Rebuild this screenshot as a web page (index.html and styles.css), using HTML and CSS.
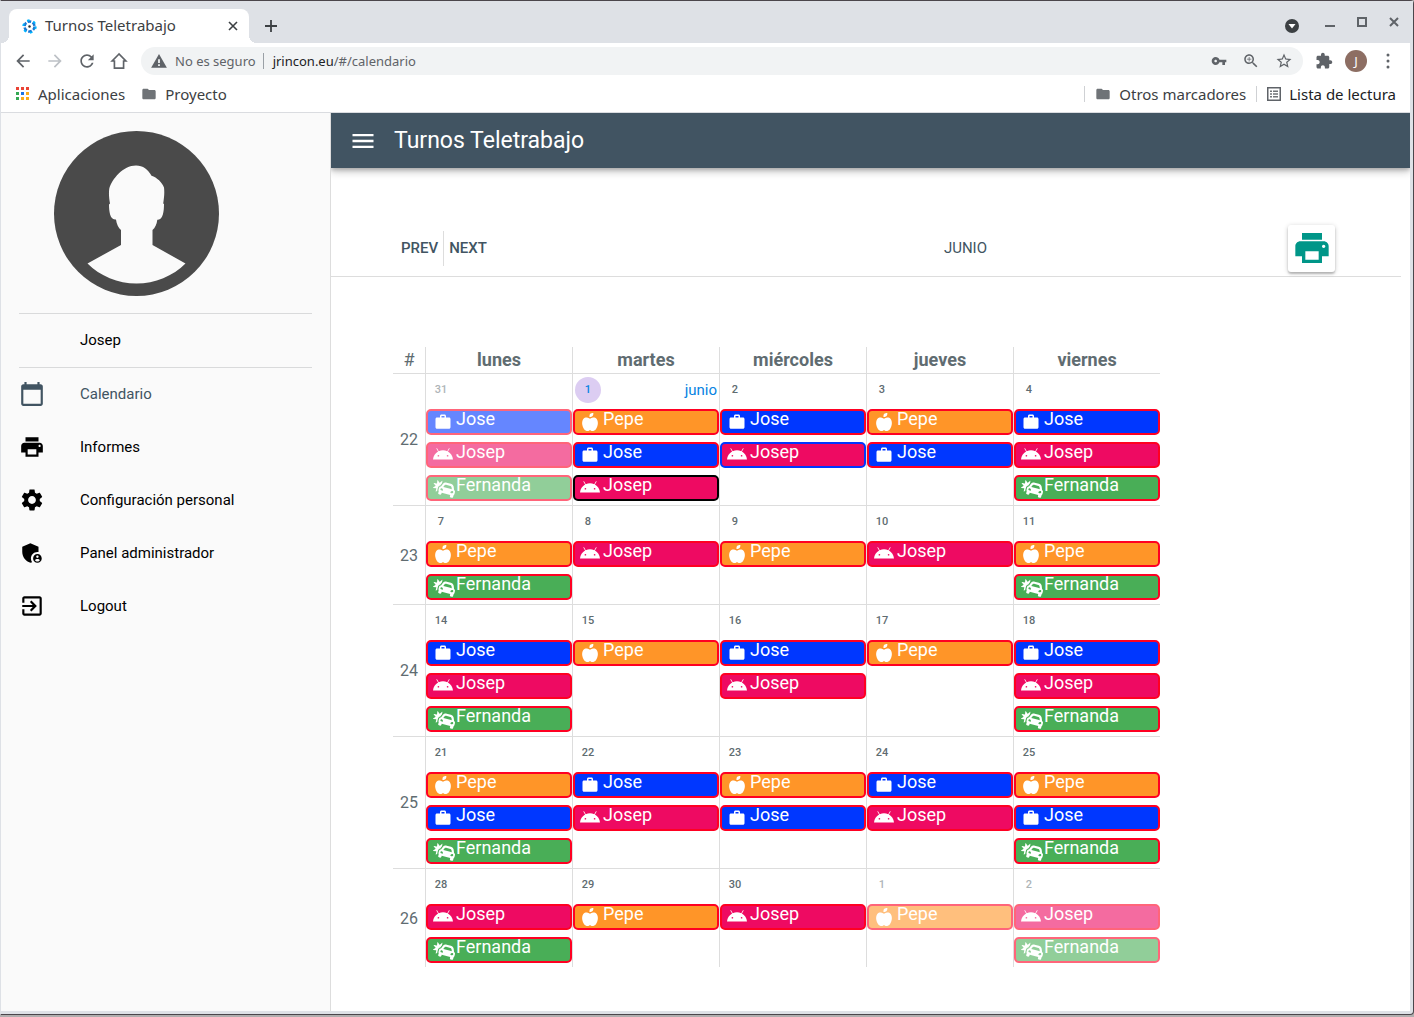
FILE: index.html
```html
<!DOCTYPE html>
<html lang="es">
<head>
<meta charset="utf-8">
<meta name="viewport" content="width=device-width, initial-scale=1">
<title>Turnos Teletrabajo</title>
<link rel="stylesheet" href="styles.css">
</head>
<body>
<svg class="sprite" aria-hidden="true">
  <symbol id="briefcase" viewBox="0 0 24 24"><path d="M20 6h-4V4c0-1.11-.89-2-2-2h-4c-1.11 0-2 .89-2 2v2H4c-1.11 0-1.99.89-1.99 2L2 19c0 1.11.89 2 2 2h16c1.11 0 2-.89 2-2V8c0-1.11-.89-2-2-2zm-6 0h-4V4h4v2z"/></symbol>
  <symbol id="apple" viewBox="0 0 448 512"><path d="M350.85 129c25.97 4.67 47.27 18.67 63.92 42 14.65 20.67 24.64 46.67 29.96 78 4.67 28.67 4.32 57.33-1 86-7.99 47.33-23.97 87-47.94 119-28.64 38.67-64.59 58-107.87 58-10.66 0-22.3-3.33-34.96-10-8.66-5.33-18.31-8-28.97-8s-20.3 2.67-28.97 8c-12.66 6.67-24.3 10-34.96 10-43.28 0-79.23-19.33-107.87-58-23.97-32-39.95-71.67-47.94-119-5.32-28.67-5.67-57.33-1-86 5.32-31.33 15.31-57.33 29.96-78 16.65-23.33 37.95-37.33 63.92-42 15.98-2.67 37.95-.33 65.92 7 23.97 6.67 44.28 14.67 60.93 24 16.65-9.33 36.96-17.33 60.93-24 27.98-7.33 49.96-9.67 65.94-7zm-54.94-41c-9.32 8.67-21.65 15-36.96 19-10.66 3.33-22.3 5-34.96 5l-14.98-1c-1.33-9.33-1.33-20 0-32 2.67-24 10.32-42.33 22.97-55 9.32-8.67 21.65-15 36.96-19 10.66-3.33 22.3-5 34.96-5l14.98 1 1 15c0 12.67-1.67 24.33-4.99 35-3.99 15.33-10.31 27.67-18.98 37z"/></symbol>
  <symbol id="android" viewBox="0 0 576 512"><path d="M420.55,301.93a24,24,0,1,1,24-24,24,24,0,0,1-24,24m-265.1,0a24,24,0,1,1,24-24,24,24,0,0,1-24,24m273.7-144.48,47.94-83a10,10,0,1,0-17.27-10h0l-48.54,84.07a301.25,301.25,0,0,0-246.56,0L116.18,64.45a10,10,0,1,0-17.27,10h0l47.94,83C64.53,202.22,8.24,285.55,0,384H576c-8.24-98.45-64.54-181.78-146.85-226.55"/></symbol>
  <symbol id="car" viewBox="0 0 640 512"><path d="M143.25 220.81l-12.42 46.37c-3.01 11.25-3.63 22.89-2.41 34.39l-35.2 28.98c-6.57 5.41-16.31-.43-14.62-8.77l15.44-76.68c1.06-5.26-2.66-10.28-8-10.79l-77.86-7.55c-8.47-.82-11.23-11.83-4.14-16.54l65.15-43.3c4.46-2.97 5.38-9.15 1.98-13.29L21.46 93.22c-5.41-6.57.43-16.3 8.78-14.62l76.68 15.44c5.26 1.06 10.28-2.66 10.8-8l7.55-77.86c.82-8.48 11.83-11.23 16.55-4.14l43.3 65.14c2.97 4.46 9.15 5.38 13.29 1.98l60.4-49.71c6.57-5.41 16.3.43 14.62 8.77L262.1 86.38c-2.71 3.05-5.43 6.09-7.91 9.4l-32.15 42.97-10.71 14.32c-32.73 8.76-59.18 34.53-68.08 67.74zm494.57 132.51l-12.42 46.36c-3.13 11.68-9.38 21.61-17.55 29.36a66.876 66.876 0 0 1-8.76 7l-13.99 52.23c-1.14 4.27-3.1 8.1-5.65 11.38-7.67 9.84-20.74 14.68-33.54 11.25L515 502.62c-17.07-4.57-27.2-22.12-22.63-39.19l8.28-30.91-247.28-66.26-8.28 30.91c-4.57 17.07-22.12 27.2-39.19 22.63l-30.91-8.28c-12.8-3.43-21.7-14.16-23.42-26.51-.57-4.12-.35-8.42.79-12.68l13.99-52.23a66.62 66.62 0 0 1-4.09-10.45c-3.2-10.79-3.65-22.52-.52-34.2l12.42-46.37c5.31-19.8 19.36-34.83 36.89-42.21a64.336 64.336 0 0 1 18.49-4.72l18.13-24.23 32.15-42.97c3.45-4.61 7.19-8.9 11.2-12.84 8-7.89 17.03-14.44 26.74-19.51 4.86-2.54 9.89-4.71 15.05-6.49 10.33-3.58 21.19-5.63 32.24-6.04 11.05-.41 22.31.82 33.43 3.8l122.68 32.87c11.12 2.98 21.48 7.54 30.85 13.43a111.11 111.11 0 0 1 34.69 34.5c8.82 13.88 14.64 29.84 16.68 46.99l6.36 53.29 3.59 30.05a64.49 64.49 0 0 1 22.74 29.93c4.39 11.88 5.29 25.19 1.75 38.39zM255.58 234.34c-18.55-4.97-34.21 4.04-39.17 22.53-4.96 18.49 4.11 34.12 22.65 39.09 18.55 4.97 45.54 15.51 50.49-2.98 4.96-18.49-15.43-53.67-33.97-58.64zm290.61 28.17l-6.36-53.29c-.58-4.87-1.89-9.53-3.82-13.86-5.8-12.99-17.2-23.01-31.42-26.82l-122.68-32.87a48.008 48.008 0 0 0-50.86 17.61l-32.15 42.97 172 46.08 75.29 20.18zm18.49 54.65c-18.55-4.97-53.8 15.31-58.75 33.79-4.95 18.49 23.69 22.86 42.24 27.83 18.55 4.97 34.21-4.04 39.17-22.53 4.95-18.48-4.11-34.12-22.66-39.09z"/></symbol>
  <symbol id="print" viewBox="0 0 24 24"><path d="M19 8H5c-1.66 0-3 1.34-3 3v6h4v4h12v-4h4v-6c0-1.66-1.34-3-3-3zm-3 11H8v-5h8v5zm3-7c-.55 0-1-.45-1-1s.45-1 1-1 1 .45 1 1-.45 1-1 1zm-1-9H6v4h12V3z"/></symbol>
  <symbol id="folder" viewBox="0 0 24 24"><path d="M10 4H4c-1.1 0-2 .9-2 2v12c0 1.100.9 2 2 2h16c1.100 0 2-.9 2-2V8c0-1.100-.9-2-2-2h-8l-2-2z"/></symbol>
</svg>
<div class="window">
  <header class="browser">
    <div class="tabs">
      <div class="tab">
        <svg class="favicon" viewBox="0 0 24 24"><g fill="none" stroke-width="4"><circle cx="12" cy="12" r="8" stroke="#1976d2" stroke-dasharray="6 2.380"/><circle cx="12" cy="12" r="10" stroke="#00b4ff" stroke-width="3" stroke-dasharray="4 6.470"/></g><circle cx="12" cy="12" r="2" fill="#263238"/></svg>
        <span class="tab-title">Turnos Teletrabajo</span>
        <button class="plain" aria-label="Cerrar pestaña"><svg class="i10" viewBox="0 0 10 10"><path d="M1 1l8 8M9 1l-8 8" fill="none" stroke="#3c4043" stroke-width="1.600"/></svg></button>
      </div>
      <button class="plain new-tab" aria-label="Nueva pestaña"><svg class="i12" viewBox="0 0 12 12"><path d="M6 0v12M0 6h12" fill="none" stroke="#3c4043" stroke-width="1.800"/></svg></button>
      <div class="controls">
        <button class="plain low" aria-label="Buscar pestañas"><svg class="i14" viewBox="0 0 14 14"><circle cx="7" cy="7" r="7" fill="#3c4043"/><path d="M3.500 5h7L7 9.500z" fill="#fff"/></svg></button>
        <button class="plain" aria-label="Minimizar"><svg class="i10" viewBox="0 0 10 10"><path d="M0 9h10" stroke="#5f6368" stroke-width="2"/></svg></button>
        <button class="plain" aria-label="Maximizar"><svg class="i10" viewBox="0 0 10 10"><path d="M1 1h8v8H1z" fill="none" stroke="#5f6368" stroke-width="2"/></svg></button>
        <button class="plain" aria-label="Cerrar"><svg class="i10" viewBox="0 0 10 10"><path d="M1 1l8 8M9 1l-8 8" fill="none" stroke="#5f6368" stroke-width="2"/></svg></button>
      </div>
    </div>
    <div class="toolbar">
      <button class="plain" aria-label="Atrás"><svg class="i20" viewBox="0 0 24 24"><path d="M20 11H7.830l5.590-5.590L12 4l-8 8 8 8 1.410-1.410L7.830 13H20v-2z"/></svg></button>
      <button class="plain faint" aria-label="Adelante"><svg class="i20" viewBox="0 0 24 24"><path d="M12 4l-1.410 1.410L16.170 11H4v2h12.170l-5.580 5.590L12 20l8-8z"/></svg></button>
      <button class="plain" aria-label="Recargar"><svg class="i20" viewBox="0 0 24 24"><path d="M17.650 6.350C16.200 4.900 14.210 4 12 4c-4.420 0-7.990 3.580-7.990 8s3.570 8 7.990 8c3.730 0 6.840-2.550 7.730-6h-2.080c-.82 2.330-3.040 4-5.650 4-3.310 0-6-2.690-6-6s2.690-6 6-6c1.660 0 3.140.69 4.220 1.780L13 11h7V4l-2.350 2.350z"/></svg></button>
      <button class="plain" aria-label="Inicio"><svg class="i20" viewBox="0 0 24 24"><path d="M12 3.600L3.800 12H6.500V20.500h11V12h2.700z" fill="none" stroke="#5f6368" stroke-width="2"/></svg></button>
      <div class="omnibox">
        <svg class="i18" viewBox="0 0 24 24"><path d="M1.500 21h21L12 2.500zM13.200 18.500h-2.400v-2.200h2.400zm0-4h-2.400V9.500h2.400z"/></svg>
        <span class="insecure">No es seguro</span>
        <label class="host" for="url">jrincon.eu</label>
        <input class="url" id="url" type="text" value="/#/calendario">
        <button class="plain" aria-label="Contraseñas"><svg class="i16" viewBox="0 0 24 24"><path d="M12.650 10C11.830 7.670 9.610 6 7 6c-3.310 0-6 2.690-6 6s2.690 6 6 6c2.610 0 4.830-1.670 5.650-4H17v4h4v-4h2v-4H12.650zM7 14c-1.100 0-2-.9-2-2s.9-2 2-2 2 .9 2 2-.9 2-2 2z"/></svg></button>
        <button class="plain" aria-label="Zoom"><svg class="i18" viewBox="0 0 24 24"><path d="M15.500 14h-.79l-.28-.27C15.410 12.590 16 11.110 16 9.500 16 5.910 13.090 3 9.500 3S3 5.910 3 9.500 5.910 16 9.500 16c1.610 0 3.090-.59 4.230-1.570l.27.28v.79l5 4.990L20.490 19l-4.990-5zm-6 0C7.010 14 5 11.990 5 9.500S7.010 5 9.500 5 14 7.010 14 9.500 11.990 14 9.500 14zM12.500 9H10V6.500H9V9H6.500v1H9v2.500h1V10h2.500z"/></svg></button>
        <button class="plain" aria-label="Añadir a marcadores"><svg class="i18" viewBox="0 0 24 24"><path d="M22 9.240l-7.190-.62L12 2 9.190 8.630 2 9.240l5.460 4.730L5.820 21 12 17.270 18.180 21l-1.630-7.030L22 9.240zM12 15.400l-3.760 2.270 1-4.280-3.320-2.880 4.380-.38L12 6.100l1.710 4.040 4.380.38-3.320 2.880 1 4.280L12 15.400z"/></svg></button>
      </div>
      <button class="plain" aria-label="Extensiones"><svg class="i18" viewBox="0 0 24 24"><path d="M20.500 11H19V7c0-1.100-.9-2-2-2h-4V3.500C13 2.120 11.880 1 10.500 1S8 2.120 8 3.500V5H4c-1.100 0-1.990.9-1.990 2v3.800H3.500c1.490 0 2.700 1.210 2.700 2.700s-1.210 2.700-2.700 2.700H2V20c0 1.100.9 2 2 2h3.800v-1.500c0-1.490 1.210-2.700 2.700-2.700 1.490 0 2.700 1.210 2.700 2.700V22H17c1.100 0 2-.9 2-2v-4h1.500c1.380 0 2.500-1.120 2.500-2.500S21.880 11 20.500 11z"/></svg></button>
      <button class="plain profile">J</button>
      <button class="plain" aria-label="Menú"><svg class="i18" viewBox="0 0 24 24"><circle cx="12" cy="4" r="2"/><circle cx="12" cy="12" r="2"/><circle cx="12" cy="20" r="2"/></svg></button>
    </div>
    <nav class="bookmarks" aria-label="Marcadores">
      <a class="bookmark" href="#aplicaciones"><svg class="i14" viewBox="0 0 14 14"><path d="M0 0h3v3H0zM5 0h3v3H5zM10 0h3v3h-3z" fill="#ea4335"/><path d="M0 5h3v3H0zM0 10h3v3H0z" fill="#34a853"/><path d="M5 5h3v3H5z" fill="#1a73e8"/><path d="M10 5h3v3h-3zM5 10h3v3H5zM10 10h3v3h-3z" fill="#fbab1a"/></svg>Aplicaciones</a>
      <a class="bookmark" href="#proyecto"><svg class="i16"><use href="#folder"/></svg>Proyecto</a>
      <span class="rule push"></span>
      <a class="bookmark" href="#otros"><svg class="i16"><use href="#folder"/></svg>Otros marcadores</a>
      <span class="rule"></span>
      <a class="bookmark dark" href="#lectura"><svg class="i14" viewBox="0 0 14 14"><path d="M.750.750h12.500v12.500H.750z" fill="none" stroke="#5f6368" stroke-width="1.500"/><path d="M3 3.500h2v1.500H3zM6 3.500h5v1.500H6zM3 6.250h2v1.500H3zM6 6.250h5v1.500H6zM3 9h2v1.500H3zM6 9h5v1.500H6z"/></svg>Lista de lectura</a>
    </nav>
  </header>
  <div class="app">
    <aside class="sidebar">
      <svg class="avatar" viewBox="0 0 165 165" role="img" aria-label="Josep"><circle cx="82.500" cy="82.500" r="82.500" fill="#4a4a4a"/><path fill="#fafafa" d="M82 34.500C89 34.500 94 38.500 97.500 44.800C103 46.500 108 51.500 110 56.500C110.700 62 110 67 109.200 72.500L110 73C110 80 109 88.500 104 88.700H103.300C102.800 93 101 97 98.500 99V114L131.500 132.500C119 145 101 152.500 82.500 152.500C64 152.500 46 145 33.500 132.500L67 114V99C64.500 97 62.500 93 62 88.500H61C56 88.500 55 80 55 73.500L56 72.500C55 67 54.700 63 55.200 58C58 48 69 34.500 82 34.500Z"/></svg>
      <div class="user">Josep</div>
      <nav class="menu" aria-label="Principal">
        <a class="item active" href="#/calendario"><svg class="i26" viewBox="0 0 24 24"><path d="M20 3h-1V1h-2v2H7V1H5v2H4c-1.100 0-2 .9-2 2v16c0 1.100.9 2 2 2h16c1.100 0 2-.9 2-2V5c0-1.100-.9-2-2-2zm0 18H4V8h16v13z"/></svg>Calendario</a>
        <a class="item" href="#/informes"><svg class="i26"><use href="#print"/></svg>Informes</a>
        <a class="item" href="#/configuracion"><svg class="i26" viewBox="0 0 24 24"><path d="M19.140 12.940c.04-.3.06-.61.06-.94 0-.32-.02-.64-.07-.94l2.030-1.580c.18-.14.23-.41.12-.61l-1.920-3.320c-.12-.22-.37-.29-.59-.22l-2.390.96c-.5-.38-1.030-.7-1.620-.94l-.36-2.540c-.04-.24-.24-.41-.48-.41h-3.840c-.24 0-.43.17-.47.41l-.36 2.540c-.59.24-1.130.57-1.620.94l-2.390-.96c-.22-.08-.47 0-.59.22L2.740 8.870c-.12.21-.08.47.12.61l2.030 1.580c-.05.3-.09.63-.09.94s.02.64.07.94l-2.030 1.580c-.18.14-.23.41-.12.61l1.920 3.320c.12.22.37.29.59.22l2.390-.96c.5.38 1.030.7 1.620.94l.36 2.540c.05.24.24.41.48.41h3.840c.24 0 .44-.17.47-.41l.36-2.540c.59-.24 1.130-.56 1.620-.94l2.390.96c.22.08.47 0 .59-.22l1.920-3.320c.12-.22.07-.47-.12-.61l-2.010-1.580zM12 15.600c-1.980 0-3.600-1.620-3.600-3.600s1.620-3.600 3.600-3.600 3.600 1.620 3.600 3.600-1.620 3.600-3.600 3.600z"/></svg>Configuración personal</a>
        <a class="item" href="#/admin"><svg class="i26" viewBox="0 0 24 24"><path d="M17 11c.34 0 .67.04 1 .09V6.270L10.500 3 3 6.270v4.910c0 4.540 3.200 8.790 7.500 9.820.55-.13 1.080-.32 1.600-.55-.69-.98-1.100-2.170-1.100-3.450 0-3.310 2.690-6 6-6z"/><path d="M17 13c-2.210 0-4 1.790-4 4s1.790 4 4 4 4-1.790 4-4-1.790-4-4-4zm0 1.380c.62 0 1.120.51 1.120 1.120s-.51 1.120-1.120 1.120-1.120-.51-1.120-1.120.5-1.120 1.120-1.120zm0 5.370c-.93 0-1.740-.46-2.240-1.170.05-.72 1.510-1.080 2.240-1.080s2.190.36 2.240 1.080c-.5.71-1.310 1.170-2.240 1.170z"/></svg>Panel administrador</a>
        <a class="item" href="#/logout"><svg class="i26" viewBox="0 0 24 24"><path d="M10.090 15.590L11.500 17l5-5-5-5-1.410 1.410L12.670 11H3v2h9.670l-2.580 2.590zM19 3H5c-1.110 0-2 .9-2 2v4h2V5h14v14H5v-4H3v4c0 1.100.89 2 2 2h14c1.100 0 2-.9 2-2V5c0-1.100-.9-2-2-2z"/></svg>Logout</a>
      </nav>
    </aside>
    <div class="page">
      <div class="appbar">
        <button class="plain" aria-label="Menu"><svg class="i28" viewBox="0 0 24 24"><path d="M3 18h18v-2H3v2zm0-5h18v-2H3v2zm0-7v2h18V6H3z"/></svg></button>
        <h1 class="title">Turnos Teletrabajo</h1>
      </div>
      <main class="content">
        <div class="actions">
          <button class="plain step">PREV</button>
          <span class="divider"></span>
          <button class="plain step">NEXT</button>
          <span class="month">JUNIO</span>
          <button class="print" aria-label="Imprimir"><svg class="i40"><use href="#print"/></svg></button>
        </div>
        <table class="calendar">
          <thead>
            <tr><th class="week">#</th><th>lunes</th><th>martes</th><th>miércoles</th><th>jueves</th><th>viernes</th></tr>
          </thead>
          <tbody>
            <tr>
              <th class="week">22</th>
              <td class="outside"><div class="date"><span class="num">31</span></div>
                <div class="shift jose"><svg><use href="#briefcase"/></svg>Jose</div>
                <div class="shift josep"><svg><use href="#android"/></svg>Josep</div>
                <div class="shift fernanda"><svg><use href="#car"/></svg>Fernanda</div></td>
              <td class="today"><div class="date"><span class="num">1</span><span>junio</span></div>
                <div class="shift pepe"><svg><use href="#apple"/></svg>Pepe</div>
                <div class="shift jose"><svg><use href="#briefcase"/></svg>Jose</div>
                <div class="shift josep own"><svg><use href="#android"/></svg>Josep</div></td>
              <td><div class="date"><span class="num">2</span></div>
                <div class="shift jose"><svg><use href="#briefcase"/></svg>Jose</div>
                <div class="shift josep swap"><svg><use href="#android"/></svg>Josep</div></td>
              <td><div class="date"><span class="num">3</span></div>
                <div class="shift pepe"><svg><use href="#apple"/></svg>Pepe</div>
                <div class="shift jose"><svg><use href="#briefcase"/></svg>Jose</div></td>
              <td><div class="date"><span class="num">4</span></div>
                <div class="shift jose"><svg><use href="#briefcase"/></svg>Jose</div>
                <div class="shift josep"><svg><use href="#android"/></svg>Josep</div>
                <div class="shift fernanda"><svg><use href="#car"/></svg>Fernanda</div></td>
            </tr>
            <tr>
              <th class="week">23</th>
              <td><div class="date"><span class="num">7</span></div>
                <div class="shift pepe"><svg><use href="#apple"/></svg>Pepe</div>
                <div class="shift fernanda"><svg><use href="#car"/></svg>Fernanda</div></td>
              <td><div class="date"><span class="num">8</span></div>
                <div class="shift josep"><svg><use href="#android"/></svg>Josep</div></td>
              <td><div class="date"><span class="num">9</span></div>
                <div class="shift pepe"><svg><use href="#apple"/></svg>Pepe</div></td>
              <td><div class="date"><span class="num">10</span></div>
                <div class="shift josep"><svg><use href="#android"/></svg>Josep</div></td>
              <td><div class="date"><span class="num">11</span></div>
                <div class="shift pepe"><svg><use href="#apple"/></svg>Pepe</div>
                <div class="shift fernanda"><svg><use href="#car"/></svg>Fernanda</div></td>
            </tr>
            <tr>
              <th class="week">24</th>
              <td><div class="date"><span class="num">14</span></div>
                <div class="shift jose"><svg><use href="#briefcase"/></svg>Jose</div>
                <div class="shift josep"><svg><use href="#android"/></svg>Josep</div>
                <div class="shift fernanda"><svg><use href="#car"/></svg>Fernanda</div></td>
              <td><div class="date"><span class="num">15</span></div>
                <div class="shift pepe"><svg><use href="#apple"/></svg>Pepe</div></td>
              <td><div class="date"><span class="num">16</span></div>
                <div class="shift jose"><svg><use href="#briefcase"/></svg>Jose</div>
                <div class="shift josep"><svg><use href="#android"/></svg>Josep</div></td>
              <td><div class="date"><span class="num">17</span></div>
                <div class="shift pepe"><svg><use href="#apple"/></svg>Pepe</div></td>
              <td><div class="date"><span class="num">18</span></div>
                <div class="shift jose"><svg><use href="#briefcase"/></svg>Jose</div>
                <div class="shift josep"><svg><use href="#android"/></svg>Josep</div>
                <div class="shift fernanda"><svg><use href="#car"/></svg>Fernanda</div></td>
            </tr>
            <tr>
              <th class="week">25</th>
              <td><div class="date"><span class="num">21</span></div>
                <div class="shift pepe"><svg><use href="#apple"/></svg>Pepe</div>
                <div class="shift jose"><svg><use href="#briefcase"/></svg>Jose</div>
                <div class="shift fernanda"><svg><use href="#car"/></svg>Fernanda</div></td>
              <td><div class="date"><span class="num">22</span></div>
                <div class="shift jose"><svg><use href="#briefcase"/></svg>Jose</div>
                <div class="shift josep"><svg><use href="#android"/></svg>Josep</div></td>
              <td><div class="date"><span class="num">23</span></div>
                <div class="shift pepe"><svg><use href="#apple"/></svg>Pepe</div>
                <div class="shift jose"><svg><use href="#briefcase"/></svg>Jose</div></td>
              <td><div class="date"><span class="num">24</span></div>
                <div class="shift jose"><svg><use href="#briefcase"/></svg>Jose</div>
                <div class="shift josep"><svg><use href="#android"/></svg>Josep</div></td>
              <td><div class="date"><span class="num">25</span></div>
                <div class="shift pepe"><svg><use href="#apple"/></svg>Pepe</div>
                <div class="shift jose"><svg><use href="#briefcase"/></svg>Jose</div>
                <div class="shift fernanda"><svg><use href="#car"/></svg>Fernanda</div></td>
            </tr>
            <tr>
              <th class="week">26</th>
              <td><div class="date"><span class="num">28</span></div>
                <div class="shift josep"><svg><use href="#android"/></svg>Josep</div>
                <div class="shift fernanda"><svg><use href="#car"/></svg>Fernanda</div></td>
              <td><div class="date"><span class="num">29</span></div>
                <div class="shift pepe"><svg><use href="#apple"/></svg>Pepe</div></td>
              <td><div class="date"><span class="num">30</span></div>
                <div class="shift josep"><svg><use href="#android"/></svg>Josep</div></td>
              <td class="outside"><div class="date"><span class="num">1</span></div>
                <div class="shift pepe"><svg><use href="#apple"/></svg>Pepe</div></td>
              <td class="outside"><div class="date"><span class="num">2</span></div>
                <div class="shift josep"><svg><use href="#android"/></svg>Josep</div>
                <div class="shift fernanda"><svg><use href="#car"/></svg>Fernanda</div></td>
            </tr>
          </tbody>
        </table>
      </main>
    </div>
  </div>
</div>
</body>
</html>
```
FILE: styles.css
```css
* { box-sizing: border-box; }

body {
  margin: 0;
  padding-bottom: 2px;
  background: #b1aeae;
  font-family: Roboto, sans-serif;
  font-size: 15px;
  color: #000;
}

a { color: inherit; text-decoration: none; }
svg { display: block; flex: none; fill: currentColor; }
.sprite { position: absolute; width: 0; height: 0; }

.i10 { width: 10px; height: 10px; }
.i12 { width: 12px; height: 12px; }
.i14 { width: 14px; height: 14px; }
.i16 { width: 16px; height: 16px; }
.i18 { width: 18px; height: 18px; }
.i20 { width: 20px; height: 20px; }
.i26 { width: 26px; height: 26px; }
.i28 { width: 28px; height: 28px; }
.i40 { width: 40px; height: 40px; }

.plain {
  padding: 0;
  border: 0;
  background: none;
  color: inherit;
  font: inherit;
  cursor: pointer;
}

/* Browser window */
.window {
  display: flex;
  flex-direction: column;
  min-height: calc(100vh - 2px);
  border: 1px solid #4b464b;
  border-left-color: #dee1e6;
  border-radius: 0 4px 4px 0;
  background: #dee1e6;
}

.browser {
  margin-right: 3px;
  border-bottom: 1px solid #dadce0;
  background: #fff;
  color: #5f6368;
  font-family: "Noto Sans", sans-serif;
  font-size: 15px;
}

.tabs {
  display: flex;
  align-items: center;
  height: 42px;
  margin-right: -3px;
  padding: 8px 14px 0 8px;
  background: #dee1e6;
}

.tab {
  position: relative;
  display: flex;
  align-items: center;
  gap: 8px;
  width: 240px;
  height: 34px;
  padding: 0 11px 0 13px;
  border-radius: 8px 8px 0 0;
  background: #fff;
  color: #3c4043;
}

.tab::before,
.tab::after {
  content: "";
  position: absolute;
  bottom: 0;
  width: 8px;
  height: 8px;
}

.tab::before { left: -8px; background: radial-gradient(circle at 0 0, #dee1e6 8px, #fff 8px); }
.tab::after { right: -8px; background: radial-gradient(circle at 100% 0, #dee1e6 8px, #fff 8px); }
.favicon { width: 15px; height: 15px; }
.tab-title { flex: 1; line-height: 18px; padding-bottom: 2px; }
.new-tab { margin-left: 16px; }

.controls {
  display: flex;
  align-items: center;
  gap: 22px;
  margin: 0 0 8px auto;
}

.controls .low { padding-top: 8px; margin-right: 4px; }

.toolbar {
  display: flex;
  align-items: center;
  gap: 12px;
  height: 36px;
  padding: 0 13px 0 12px;
  font-size: 13px;
}

.faint { color: #bdc1c6; }

.omnibox {
  display: flex;
  flex: 1;
  align-items: center;
  height: 28px;
  padding: 0 10px 0 9px;
  border-radius: 14px;
  background: #f1f3f4;
}

.insecure {
  margin-left: 7px;
  padding-right: 7px;
  border-right: 1px solid #9aa0a6;
  line-height: 16px;
}

.host { margin-left: 9px; color: #202124; }

.url {
  flex: 1;
  min-width: 0;
  padding: 0;
  border: 0;
  outline: 0;
  background: none;
  color: inherit;
  font: inherit;
}

.omnibox .plain { margin-left: 15px; }

.profile {
  width: 22px;
  height: 22px;
  border-radius: 50%;
  background: #8d6e63;
  color: #fff;
}

.bookmarks {
  display: flex;
  align-items: center;
  gap: 16px;
  height: 33px;
  padding: 0 14px 4px 15px;
}

.bookmark { display: flex; align-items: center; gap: 8px; color: #3c4043; }
.bookmark svg { color: #6f7377; }
.dark { color: #202124; }
.rule { width: 1px; height: 16px; margin: 0 -6px; background: #cfd1d4; }
.push { margin-left: auto; }

/* Application */
.app {
  display: flex;
  flex: 1;
  margin: 0 3px 3px 0;
  background: #fff;
}

.sidebar {
  flex: none;
  width: 330px;
  padding: 18px;
  border-right: 1px solid #ddd;
  background: #fafafa;
}

.avatar { width: 165px; height: 165px; margin-left: 35px; }

.user {
  margin-top: 17px;
  padding-left: 61px;
  border-top: 1px solid #d9dadb;
  border-bottom: 1px solid #d9dadb;
  line-height: 53px;
}

.menu { margin-top: -1px; }

.item {
  display: flex;
  align-items: center;
  gap: 35px;
  height: 53px;
}

.active { color: #415462; }

.page { flex: 1; min-width: 0; }

.appbar {
  display: flex;
  align-items: center;
  gap: 17px;
  height: 55px;
  padding-left: 18px;
  background: #415462;
  box-shadow: 0 2px 4px rgba(0, 0, 0, .2), 0 4px 8px rgba(0, 0, 0, .2);
  clip-path: inset(0 0 -16px 0);
  color: #fff;
}

.title { margin: 0; font-size: 23px; font-weight: 400; }

.content { padding: 52px 9px 44px 0; }

.actions {
  display: flex;
  align-items: center;
  height: 57px;
  padding: 0 66px 0 70px;
  border-bottom: 1px solid #ddd;
  color: #415462;
}

.step { font-weight: 500; }
.divider { width: 1px; height: 35px; margin: 0 5px; background: #ddd; }
.month { flex: 1; padding-left: 156px; text-align: center; }

.print {
  display: grid;
  place-items: center;
  width: 47px;
  height: 47px;
  padding: 0;
  border: 0;
  border-radius: 3px;
  background: #fff;
  box-shadow: 0 1px 5px rgba(0, 0, 0, .2), 0 2px 2px rgba(0, 0, 0, .2);
  color: #009688;
  cursor: pointer;
}

/* Calendar */
.calendar {
  width: calc(100% - 62px);
  max-width: 767px;
  margin: 70px 0 0 62px;
  border-spacing: 0;
  table-layout: fixed;
  color: #606c71;
}

.calendar th,
.calendar td { padding: 0; border-left: 1px solid #ddd; }

.calendar th { font-size: 18px; font-weight: 700; }
.calendar thead th { height: 27px; line-height: 26px; border-bottom: 1px solid #ddd; }
.calendar td { padding-bottom: 4px; border-bottom: 1px solid #ddd; vertical-align: top; }
.calendar .week { width: 32px; border-left: 0; font-size: 16px; font-weight: 400; }
.calendar thead .week { font-size: 18px; }
.calendar tbody .week { border-bottom: 1px solid #ddd; }
.calendar tbody tr:last-child > * { border-bottom: 0; }

.date {
  display: flex;
  align-items: center;
  justify-content: space-between;
  height: 35px;
  padding: 0 2px 4px;
}

.num {
  width: 26px;
  border-radius: 50%;
  font-size: 11px;
  font-weight: 500;
  line-height: 26px;
  text-align: center;
}

.today .date { color: #0783e2; }
.today .num { background: #dccdf2; }
.outside .date { opacity: .5; }
.outside .shift { opacity: .6; }

.shift {
  display: flex;
  height: 26px;
  border: 2px solid #ff0022;
  border-radius: 5px;
  color: #fff;
  font-size: 18px;
  line-height: 16px;
}

.shift + .shift { margin-top: 7px; }
.shift svg { width: 20px; height: 18px; margin: 2px 3px 0 5px; }
.shift.fernanda svg { width: 22px; margin: 3px 1px 0 5px; }
.jose { background: #0037ff; }
.josep { background: #ee0a62; }
.pepe { background: #ff9528; }
.fernanda { background: #49ae57; }
.own { border-color: #000; }
.swap { border-color: #0037ff; }
```
